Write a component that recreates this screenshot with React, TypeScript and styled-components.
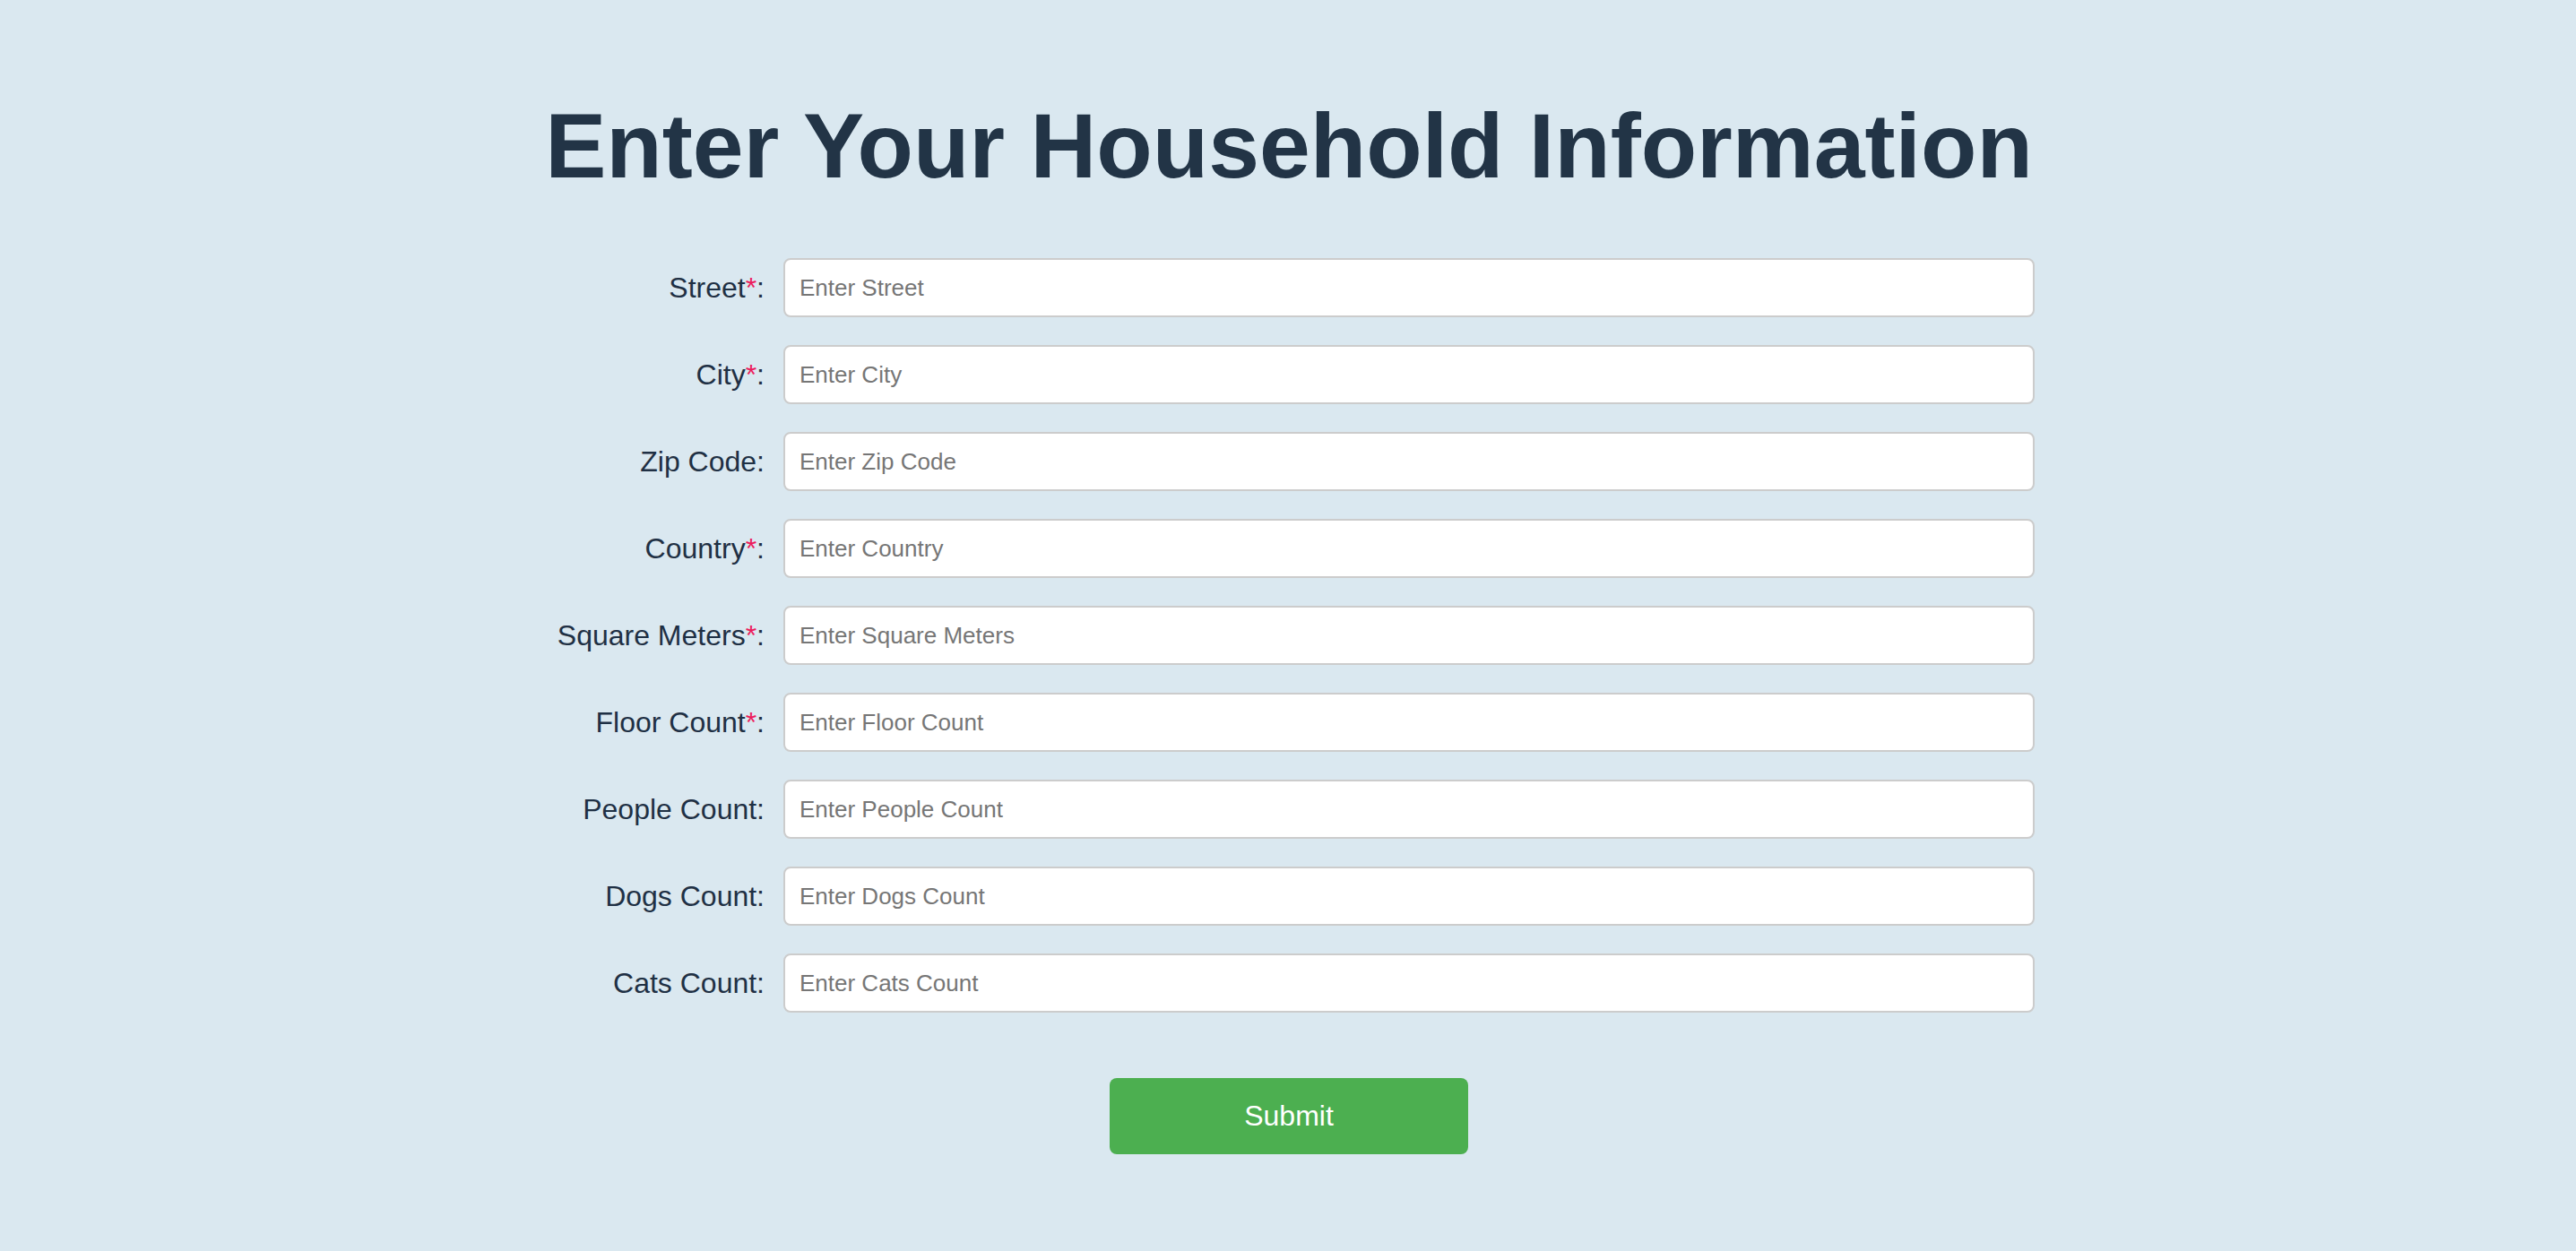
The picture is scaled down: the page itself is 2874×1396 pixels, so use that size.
import React from "react";
import styled, { createGlobalStyle } from "styled-components";

const GlobalStyle = createGlobalStyle`
  html, body {
    margin: 0;
    padding: 0;
    background: #dae8f0;
  }
  body {
    font-family: "Liberation Sans", Arial, sans-serif;
  }
  * { box-sizing: border-box; }
`;

const Page = styled.main`
  min-height: 1396px;
  background: #dae8f0;
  display: flex;
  flex-direction: column;
  align-items: center;
  padding-top: 106px;
  padding-left: 2px;
`;

const Title = styled.h1`
  margin: 0;
  font-family: "Liberation Sans", Arial, sans-serif;
  font-weight: 700;
  font-size: 102.2px;
  line-height: 114px;
  color: #223446;
  text-align: center;
`;

const Form = styled.form`
  margin-top: 68px;
  display: flex;
  flex-direction: column;
  align-items: center;
`;

const Fields = styled.div`
  display: grid;
  grid-template-columns: 247px 1396px;
  column-gap: 21px;
  row-gap: 31px;
  align-items: center;
`;

const Label = styled.label`
  font-family: "Liberation Sans", Arial, sans-serif;
  font-size: 32px;
  color: #1f3044;
  text-align: right;
  white-space: nowrap;
`;

const Required = styled.span`
  color: #ec1c5c;
`;

const Input = styled.input`
  width: 100%;
  height: 66px;
  border: 2px solid #cccccc;
  border-radius: 8px;
  background: #ffffff;
  padding: 0 16px;
  font-family: "Liberation Sans", Arial, sans-serif;
  font-size: 26px;
  color: #222;
  outline: none;
  &::placeholder {
    color: #767676;
  }
`;

const SubmitButton = styled.button`
  margin-top: 73px;
  width: 400px;
  height: 85px;
  border: none;
  border-radius: 8px;
  background: #4caf50;
  color: #ffffff;
  font-family: "Liberation Sans", Arial, sans-serif;
  font-size: 32px;
  cursor: pointer;
`;

const fields: { name: string; required: boolean }[] = [
  { name: "Street", required: true },
  { name: "City", required: true },
  { name: "Zip Code", required: false },
  { name: "Country", required: true },
  { name: "Square Meters", required: true },
  { name: "Floor Count", required: true },
  { name: "People Count", required: false },
  { name: "Dogs Count", required: false },
  { name: "Cats Count", required: false },
];

export default function App() {
  return (
    <>
      <GlobalStyle />
      <Page>
        <Title>Enter Your Household Information</Title>
        <Form onSubmit={(e) => e.preventDefault()}>
          <Fields>
            {fields.map((f) => {
              const id = f.name.toLowerCase().replace(/\s+/g, "-");
              return (
                <React.Fragment key={f.name}>
                  <Label htmlFor={id}>
                    {f.name}
                    {f.required && <Required>*</Required>}:
                  </Label>
                  <Input id={id} type="text" placeholder={`Enter ${f.name}`} />
                </React.Fragment>
              );
            })}
          </Fields>
          <SubmitButton type="submit">Submit</SubmitButton>
        </Form>
      </Page>
    </>
  );
}
